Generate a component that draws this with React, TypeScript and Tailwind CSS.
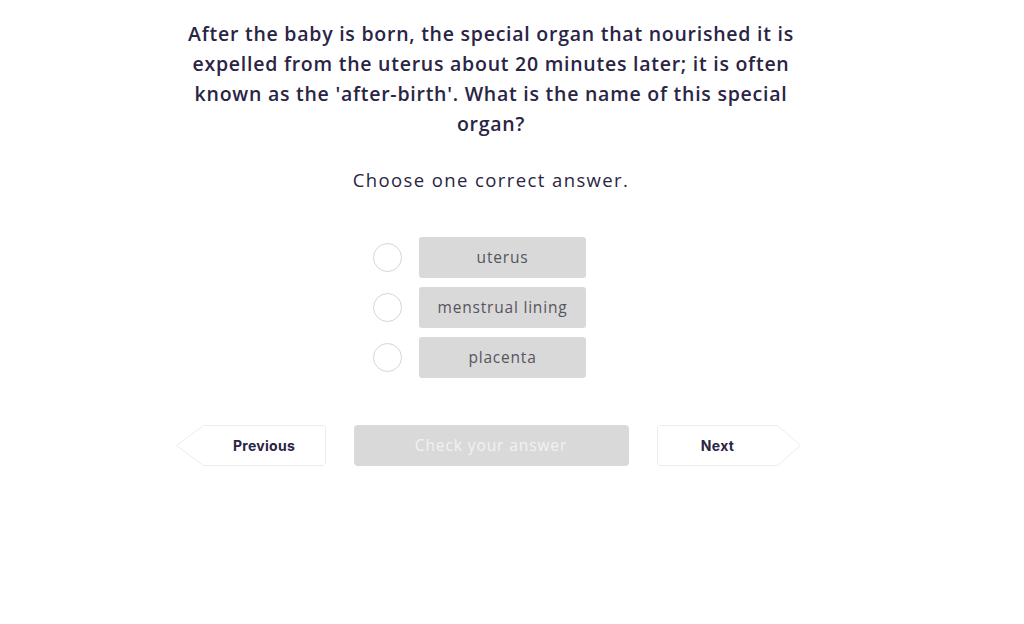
import React from "react";

const options = ["uterus", "menstrual lining", "placenta"];

function ArrowButton({ label, dir }: { label: string; dir: "left" | "right" }) {
  const points =
    dir === "left"
      ? "27.5,0.5 147.5,0.5 149.5,2.5 149.5,38.5 147.5,40.5 27.5,40.5 0.5,20.5"
      : "2.5,0.5 120.5,0.5 143.5,20.5 120.5,40.5 2.5,40.5 0.5,38.5 0.5,2.5";
  const w = dir === "left" ? 150 : 144;
  return (
    <button className={`relative h-[41px] ${dir === "left" ? "w-[150px]" : "w-[144px]"} shrink-0`}>
      <svg className="absolute inset-0" width={w} height={41} viewBox={`0 0 ${w} 41`}>
        <polygon points={points} fill="#ffffff" stroke="#ececec" strokeWidth="1" strokeLinejoin="round" />
      </svg>
      <span
        className={`relative flex h-full items-center justify-center text-[14px] font-bold tracking-[0.3px] text-[#2a2445] ${
          dir === "left" ? "pl-[27px]" : "pr-[22px]"
        }`}
        style={{ fontFamily: "Inter, 'Liberation Sans', sans-serif" }}
      >
        {label}
      </span>
    </button>
  );
}

export default function App() {
  return (
    <div
      className="min-h-[624px] w-full bg-white text-[#2a2445]"
      style={{ fontFamily: "'Open Sans', 'Noto Sans', sans-serif" }}
    >
      <div className="flex w-[982px] flex-col items-center pt-[19px]">
        {/* Question */}
        <h1 className="w-[612px] text-center text-[19.5px] font-semibold leading-[30px] tracking-[0.75px]">
          After the baby is born, the special organ that nourished it is expelled from the uterus about 20 minutes
          later; it is often known as the 'after-birth'. What is the name of this special organ?
        </h1>

        <p className="mt-[27px] text-[18.5px] leading-[28px] tracking-[1.4px]">Choose one correct answer.</p>

        {/* Options */}
        <div className="mt-[43px] mr-[23px] flex flex-col gap-[9px]">
          {options.map((opt) => (
            <div key={opt} className="flex items-center gap-[17px]">
              <span className="h-[29px] w-[29px] rounded-full border border-[#d6d6d6] bg-white" />
              <div className="flex h-[41px] w-[167px] items-center justify-center rounded-[3px] bg-[#d9d9d9] text-[15.5px] tracking-[0.8px] text-[#57545f]">
                {opt}
              </div>
            </div>
          ))}
        </div>

        {/* Navigation */}
        <div className="mt-[47px] mr-[6px] flex items-center gap-[28px]">
          <ArrowButton label="Previous" dir="left" />
          <button className="h-[41px] w-[275px] rounded-[4px] bg-[#d9d9d9] text-[15.5px] tracking-[0.9px] text-[#f2f2f2]">
            Check your answer
          </button>
          <ArrowButton label="Next" dir="right" />
        </div>
      </div>
    </div>
  );
}
